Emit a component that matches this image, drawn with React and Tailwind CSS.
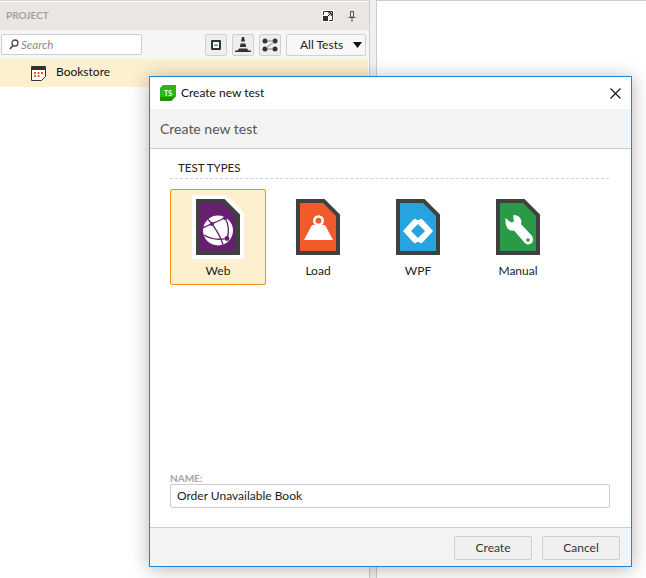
import React from "react";

const font = { fontFamily: 'Lato, "Open Sans", sans-serif' };

// the page shape shared by all the test type icons
const TestIcon = ({ color, halo, children }) => (
  <svg width="52" height="64" viewBox="0 0 52 64" className="block">
    {halo && <path d="M0 0H34L52 18V64H0Z" fill="#fff" />}
    <path d="M4 4H32.5L48 19.5V60H4Z" fill="#404040" />
    <path d="M8 8H31L44 21V56H8Z" fill={color} />
    {children}
  </svg>
);

const WebGlyph = () => (
  <g>
    <circle cx="26" cy="35.5" r="15" fill="#fff" />
    <g stroke="#66206f" strokeWidth="1.3" fill="none">
      <path d="M11 33C18 29 28 26 33 22.5" />
      <path d="M16 24.5C21 29 29 42 31 50" />
      <path d="M33 22.5C37 30 37 38 35 44" />
      <path d="M12 40C20 45 28 45 35 43" />
    </g>
    <circle cx="33" cy="23" r="2" fill="#66206f" />
    <circle cx="20" cy="29" r="2" fill="#66206f" />
    <circle cx="35" cy="43.5" r="2.4" fill="#66206f" />
  </g>
);

const LoadGlyph = () => (
  <g>
    <path d="M20 30H33L41 45H12Z" fill="#fff" />
    <circle cx="26.5" cy="25.7" r="4.2" fill="#f15a2b" stroke="#fff" strokeWidth="2.6" />
  </g>
);

const WpfGlyph = () => (
  <path
    fillRule="evenodd"
    d="M11 36L20.5 25.5L23 23.5L25 25H27L29 23.5L31.5 25.5L41 36L31.5 46.5L29 48.5L27 47H25L23 48.5L20.5 46.5ZM26 29L19 36L26 43L33 36Z"
    fill="#fff"
  />
);

const ManualGlyph = () => (
  <path
    fill="#fff"
    fillRule="evenodd"
    d="M13.5 23L19 27.5L22 26.5L21 20.5C25 19.5 29 22 29.5 27L29 29L40 41C42 44 41 48 38 49C35.5 50 33.5 49 32 47L22 35.5C17 36.5 13 33 13.5 23ZM36 43.2A1.8 1.8 0 1 0 36 46.8A1.8 1.8 0 1 0 36 43.2Z"
  />
);

const types = [
  { name: "Web", color: "#66206f", glyph: <WebGlyph />, selected: true },
  { name: "Load", color: "#f15a2b", glyph: <LoadGlyph /> },
  { name: "WPF", color: "#27a3e0", glyph: <WpfGlyph /> },
  { name: "Manual", color: "#2b9a47", glyph: <ManualGlyph /> },
];

const ToolButton = ({ children }) => (
  <div className="w-[22px] h-[22px] rounded-[2px] border border-[#d0d0d0] bg-[#eeeeee] flex items-center justify-center">
    {children}
  </div>
);

const Sidebar = () => (
  <div className="w-[369px] shrink-0 border-t border-[#d4d4d4] pt-[1px]">
    <div className="h-[28px] bg-[#e9e6e3] flex items-center pl-[6px] pr-[11px]">
      <span className="text-[10px] font-bold text-[#a3a3a3] flex-1 pb-[2px]">PROJECT</span>
      <svg width="12" height="12" viewBox="0 0 12 12" className="mr-[14px]">
        <rect x="0" y="0" width="12" height="12" fill="#fff" />
        <path d="M1.5 5V1.5H10.5V10.5H7" stroke="#333" fill="none" />
        <rect x="1" y="6" width="5" height="5" fill="#333" />
        <path d="M5.5 6.5L9 3M6 2.8H9.2V6" stroke="#111" fill="none" />
      </svg>
      <svg width="8" height="11" viewBox="0 0 8 11" className="mr-[2px]">
        <path d="M2 .5H6M2.5 .5V6H5.5V.5M.5 6.5H7.5M4 6.5V11" stroke="#555" fill="none" />
      </svg>
    </div>
    <div className="h-[29px] bg-[#f6f6f6] flex items-center pl-[1px] pr-[3px]">
      <div className="w-[141px] h-[21px] bg-white border border-[#d0d0d0] rounded-[2px] flex items-center pl-[7px] gap-[2px]">
        <svg width="10" height="11" viewBox="0 0 10 11">
          <circle cx="6" cy="4" r="3" fill="none" stroke="#444" strokeWidth="1.3" />
          <path d="M4 6.5L1 10" stroke="#444" strokeWidth="1.5" />
        </svg>
        <span className="text-[11.5px] italic text-[#8a8a8a]">Search</span>
      </div>
      <div className="ml-auto flex gap-[5px]">
        <ToolButton>
          <svg width="10" height="10" viewBox="0 0 10 10">
            <rect x="0" y="0" width="10" height="10" rx="1" fill="#333" />
            <rect x="2" y="2" width="6" height="6" fill="#fff" />
            <rect x="3" y="4.5" width="4" height="1.2" fill="#2f6fb3" />
          </svg>
        </ToolButton>
        <ToolButton>
          <svg width="18" height="16" viewBox="0 0 18 16">
            <path d="M8 0H10L11 4.5H7ZM6.6 6.5H11.4L12.2 10H5.8Z" fill="#333" />
            <path d="M5 11.5H13L14.5 13.5H17V15H1V13.5H3.5Z" fill="#333" />
          </svg>
        </ToolButton>
        <ToolButton>
          <svg width="16" height="14" viewBox="0 0 16 14">
            <g fill="#333">
              <circle cx="3" cy="3" r="2.5" />
              <circle cx="13" cy="3" r="2.5" />
              <circle cx="3" cy="11" r="2.5" />
              <circle cx="13" cy="11" r="2.5" />
            </g>
            <path d="M5 3H11M5 11H11M12 4L4 10" stroke="#888" fill="none" />
          </svg>
        </ToolButton>
        <div className="w-[80px] h-[22px] rounded-[2px] border border-[#d0d0d0] bg-[#f8f8f8] flex items-center pl-[13px] pr-[3px]">
          <span className="text-[12px] text-[#222] flex-1">All Tests</span>
          <svg width="9" height="6" viewBox="0 0 9 6">
            <path d="M0 0H9L4.5 6Z" fill="#111" />
          </svg>
        </div>
      </div>
    </div>
    <div className="h-[28px] bg-[#fdf0cf] flex items-center pl-[31px] mr-[1px]">
      <svg width="15" height="15" viewBox="0 0 15 15">
        <path d="M.5 .5H14.5V10.5L10.5 14.5H.5Z" fill="#fff" stroke="#333" />
        <rect x="1" y="1" width="13" height="3" fill="#333" />
        <g fill="#f15a2b">
          <rect x="3" y="6" width="2" height="2" />
          <rect x="6.5" y="6" width="2" height="2" />
          <rect x="10" y="6" width="2" height="2" />
          <rect x="3" y="9" width="2" height="2" />
          <rect x="6.5" y="9" width="2" height="2" />
        </g>
      </svg>
      <span className="ml-[10px] pb-[2px] text-[12px] text-[#111]">Bookstore</span>
    </div>
  </div>
);

const Dialog = () => (
  <div className="absolute left-[149px] top-[76px] w-[483px] h-[491px] bg-white border border-[#1a86e0] shadow-[0_2px_18px_rgba(0,0,0,0.3)] flex flex-col">
    <div className="h-[32px] shrink-0 flex items-center px-[10px]">
      <svg width="16" height="16" viewBox="0 0 16 16">
        <path d="M3 0H16V11L11 16H0V3Z" fill="#2eb80f" />
        <path d="M0 12H11L16 11L11 16H0Z" fill="#1f8f0a" />
        <text x="8" y="10.5" fontSize="7" fontWeight="700" fill="#fff" textAnchor="middle">TS</text>
      </svg>
      <span className="ml-[5px] text-[12px] text-[#111] flex-1">Create new test</span>
      <svg width="11" height="11" viewBox="0 0 11 11">
        <path d="M.5 .5L10.5 10.5M10.5 .5L.5 10.5" stroke="#111" strokeWidth="1.1" />
      </svg>
    </div>
    <div className="h-[40px] shrink-0 bg-[#f3f3f3] border-b border-[#cccccc] flex items-center pl-[10px] text-[14px] text-[#555]">
      Create new test
    </div>
    <div className="flex-1 min-h-0 flex flex-col px-[20px]">
      <div className="mt-[10px] h-[20px] border-b border-dashed border-[#d0d0d0] pl-[8px] mr-[2px] text-[11.5px] leading-[18px] text-[#222]">
        TEST TYPES
      </div>
      <div className="mt-[10px] flex">
        {types.map((t) => (
          <div
            key={t.name}
            className={
              "w-[96px] h-[96px] mr-[4px] rounded-[2px] border flex flex-col items-center pt-[5px] " +
              (t.selected ? "bg-[#fdf0cf] border-[#f0920f]" : "border-transparent")
            }
          >
            <TestIcon color={t.color} halo={t.selected}>
              {t.glyph}
            </TestIcon>
            <span className="mt-[4px] text-[12px] leading-[16px] text-[#222]">{t.name}</span>
          </div>
        ))}
      </div>
      <div className="mt-auto mb-[19px]">
        <div className="text-[10px] leading-[12px] font-bold text-[#a5a5a5]">NAME:</div>
        <div className="h-[24px] w-[440px] bg-white border border-[#cccccc] rounded-[2px] flex items-center pl-[6px] text-[12px] text-[#222]">
          Order Unavailable Book
        </div>
      </div>
    </div>
    <div className="h-[39px] shrink-0 bg-[#f3f3f3] border-t border-[#cccccc] flex items-center justify-end gap-[10px] pr-[11px] pt-[2px]">
      <div className="w-[78px] h-[24px] rounded-[2px] border border-[#cfcfcf] bg-[#f0f0f0] flex items-center justify-center text-[12px] text-[#333]">
        Create
      </div>
      <div className="w-[78px] h-[24px] rounded-[2px] border border-[#cfcfcf] bg-[#f0f0f0] flex items-center justify-center text-[12px] text-[#333]">
        Cancel
      </div>
    </div>
  </div>
);

export default function App() {
  return (
    <div className="relative w-[646px] h-[578px] overflow-hidden bg-white flex" style={font}>
      <Sidebar />
      <div className="w-[8px] shrink-0 bg-[#f0f0f0] border-x border-[#cccccc]" />
      <div className="flex-1 border-t border-[#cccccc]" />
      <Dialog />
    </div>
  );
}
